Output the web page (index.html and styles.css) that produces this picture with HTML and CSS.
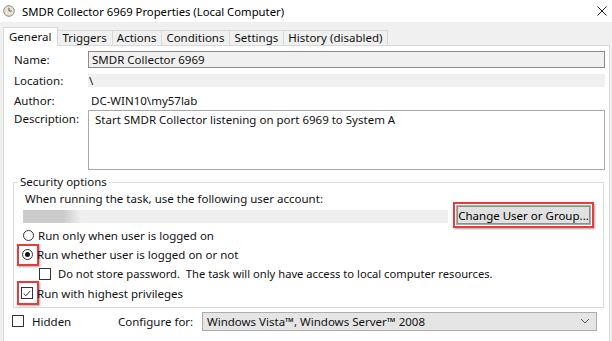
FILE: index.html
```html
<!DOCTYPE html>
<html lang="en">
<head>
    <meta charset="UTF-8">
    <title>SMDR Collector 6969 Properties</title>
    <link rel="stylesheet" href="styles.css">
</head>
<body>
    <div class="window">
        <div class="titlebar">
            <svg class="app-icon" width="12" height="12" viewBox="0 0 12 12">
                <circle cx="6" cy="6" r="5.3" fill="#e9e3d3" stroke="#8a8a8a" stroke-width="1"/>
                <path d="M6 2.8 V6 H8.6" fill="none" stroke="#555" stroke-width="1"/>
            </svg>
            <span class="title">SMDR Collector 6969 Properties (Local Computer)</span>
            <svg class="close" width="10" height="10" viewBox="0 0 10 10">
                <path d="M0.5 0.5 L9.5 9.5 M9.5 0.5 L0.5 9.5" stroke="#222" stroke-width="1"/>
            </svg>
        </div>

        <div class="dialog">
            <ul class="tabs">
                <li class="tab active">General</li>
                <li class="tab">Triggers</li>
                <li class="tab">Actions</li>
                <li class="tab">Conditions</li>
                <li class="tab">Settings</li>
                <li class="tab">History (disabled)</li>
            </ul>

            <div class="panel">
                <div class="field-row row-name">
                    <div class="label">Name:</div>
                    <div class="input name-box">SMDR Collector 6969</div>
                </div>
                <div class="field-row row-location">
                    <div class="label">Location:</div>
                    <div class="input readonly">\</div>
                </div>
                <div class="field-row row-author">
                    <div class="label">Author:</div>
                    <div class="input plain">DC-WIN10\my57lab</div>
                </div>
                <div class="field-row row-desc">
                    <div class="label">Description:</div>
                    <div class="input textarea">Start SMDR Collector listening on port 6969 to System A</div>
                </div>

                <fieldset class="security">
                    <legend>Security options</legend>
                    <div class="account-text">When running the task, use the following user account:</div>
                    <div class="account-row">
                        <div class="account-box"><span class="blur"></span></div>
                        <div class="hl hl-btn">
                            <button class="btn">Change User or Group...</button>
                        </div>
                    </div>

                    <div class="option">
                        <span class="mark-slot"><span class="radio"></span></span>
                        <span>Run only when user is logged on</span>
                    </div>
                    <div class="option">
                        <span class="mark-slot hl"><span class="radio checked"></span></span>
                        <span>Run whether user is logged on or not</span>
                    </div>
                    <div class="option sub">
                        <span class="check"></span>
                        <span>Do not store password.&nbsp; The task will only have access to local computer resources.</span>
                    </div>
                    <div class="option">
                        <span class="mark-slot hl tall">
                            <span class="check">
                                <svg width="11" height="11" viewBox="0 0 11 11">
                                    <path d="M2 5.5 L4.3 8 L9 2.8" fill="none" stroke="#333" stroke-width="1.1"/>
                                </svg>
                            </span>
                        </span>
                        <span>Run with highest privileges</span>
                    </div>
                </fieldset>

                <div class="bottom-row">
                    <div class="hidden-opt">
                        <span class="check"></span>
                        <span>Hidden</span>
                    </div>
                    <div class="configure-label">Configure for:</div>
                    <div class="combo">
                        <span>Windows Vista™, Windows Server™ 2008</span>
                        <svg width="10" height="6" viewBox="0 0 10 6">
                            <path d="M1 1 L5 5 L9 1" fill="none" stroke="#555" stroke-width="1"/>
                        </svg>
                    </div>
                </div>
            </div>
        </div>
    </div>
</body>
</html>
```

FILE: styles.css
```css
body, ul, fieldset, legend {
    margin: 0;
    padding: 0;
}

body {
    font-family: "Noto Sans", "Open Sans", sans-serif;
    font-size: 11.5px;
    color: #111;
    background-color: #f0f0f0;
    width: 612px;
    height: 341px;
    overflow: hidden;
}

.titlebar {
    display: flex;
    align-items: center;
    height: 22px;
    background-color: #ffffff;
    padding-left: 3px;
    padding-right: 4px;
}

.app-icon {
    margin-right: 7px;
}

.title {
    flex: 1;
    font-size: 11.3px;
    color: #000;
}

.close {
    margin-right: 1px;
}

.dialog {
    padding: 5px 2px 0 3px;
}

/* tab strip */
.tabs {
    display: flex;
    list-style-type: none;
    height: 18px;
    align-items: flex-end;
}

.tab {
    height: 14px;
    line-height: 13px;
    padding: 0 5px 0 4px;
    border: 1px solid #d9d9d9;
    border-bottom: none;
    border-left: none;
    background-color: #f0f0f0;
}

.tab.active {
    height: 18px;
    line-height: 18px;
    background-color: #ffffff;
    border-left: 1px solid #d9d9d9;
    padding: 0 6px 0 5px;
    position: relative;
    z-index: 1;
    margin-bottom: -1px;
}

.panel {
    background-color: #ffffff;
    border: 1px solid #d9d9d9;
    height: 290px;
    padding: 5px 4px 0 10px;
}

/* general fields */
.field-row {
    display: flex;
    align-items: center;
}

.label {
    width: 74px;
    flex-shrink: 0;
}

.row-name {
    height: 17px;
}

.row-location {
    height: 13px;
    margin-top: 6px;
}

.row-author {
    height: 14px;
    margin-top: 6px;
}

.row-desc {
    height: 60px;
    margin-top: 3px;
    align-items: flex-start;
}

.row-desc .label {
    padding-top: 1px;
}

.input {
    flex: 1;
    height: 100%;
    box-sizing: border-box;
    display: flex;
    align-items: center;
}

.name-box {
    background-color: #f0f0f0;
    border: 1px solid #8a8a8a;
    padding-left: 3px;
}

.readonly {
    background-color: #f0f0f0;
    padding-left: 1px;
}

.plain {
    padding-left: 3px;
}

.textarea {
    border: 1px solid #a9a9a9;
    align-items: flex-start;
    padding: 1px 0 0 6px;
}

/* security options */
.security {
    border: 1px solid #dcdcdc;
    margin: 6px 1px 0 -1px;
    padding: 4px 0 4px 8px;
}

.security legend {
    padding: 0 2px;
    margin-left: -4px;
    line-height: 12px;
}

.account-text {
    margin-left: 3px;
    height: 14px;
    line-height: 14px;
}

.account-row {
    display: flex;
    align-items: center;
    height: 22px;
    margin-top: -2px;
}

.account-box {
    width: 425px;
    height: 13px;
    background-color: #efefef;
    margin-left: 1px;
    margin-top: 2px;
    display: flex;
}

.blur {
    width: 58px;
    height: 13px;
    background: linear-gradient(to right, #cccccc 70%, #efefef);
}

.hl {
    border: 2px solid #e53c3c;
    box-shadow: 1px 1px 2px rgba(0, 0, 0, 0.35);
}

.hl-btn {
    margin-left: 5px;
    padding: 1px;
}

.btn {
    font-family: inherit;
    font-size: 11.5px;
    height: 20px;
    width: 135px;
    padding: 0;
    background-color: #e1e1e1;
    border: 1px solid #adadad;
    outline: 1px solid #8e8e8e;
    outline-offset: -2px;
    color: #000;
}

.option {
    display: flex;
    align-items: center;
    height: 19px;
}

.option:last-child {
    height: 20px;
}

.mark-slot {
    width: 18px;
    height: 18px;
    box-sizing: border-box;
    display: flex;
    align-items: center;
    justify-content: center;
    margin-left: -3px;
    margin-right: 1px;
    border: 2px solid transparent;
}

.mark-slot.hl {
    border-color: #e53c3c;
    width: 22px;
    height: 22px;
    margin-left: -5px;
    margin-right: -2px;
    padding-right: 2px;
}

.mark-slot.tall {
    height: 24px;
}

.radio {
    width: 11px;
    height: 11px;
    border: 1px solid #333;
    border-radius: 50%;
    box-sizing: border-box;
    background-color: #fff;
    position: relative;
}

.radio.checked::after {
    content: "";
    position: absolute;
    left: 2px;
    top: 2px;
    width: 5px;
    height: 5px;
    border-radius: 50%;
    background-color: #111;
}

.check {
    width: 12px;
    height: 12px;
    border: 1px solid #333;
    box-sizing: border-box;
    background-color: #fff;
    display: flex;
    align-items: center;
    justify-content: center;
}

.option.sub {
    font-size: 11.2px;
}

.option.sub .check {
    margin-left: 17px;
    margin-right: 7px;
}

/* bottom row */
.bottom-row {
    display: flex;
    align-items: center;
    height: 20px;
    margin-top: 3px;
}

.hidden-opt {
    display: flex;
    align-items: center;
    width: 104px;
}

.hidden-opt .check {
    margin-left: -2px;
    margin-right: 8px;
}

.configure-label {
    width: 84px;
}

.combo {
    display: flex;
    align-items: center;
    justify-content: space-between;
    width: 395px;
    height: 19px;
    box-sizing: border-box;
    background-color: #e5e5e5;
    border: 1px solid #adadad;
    padding: 0 6px 0 4px;
}
```
